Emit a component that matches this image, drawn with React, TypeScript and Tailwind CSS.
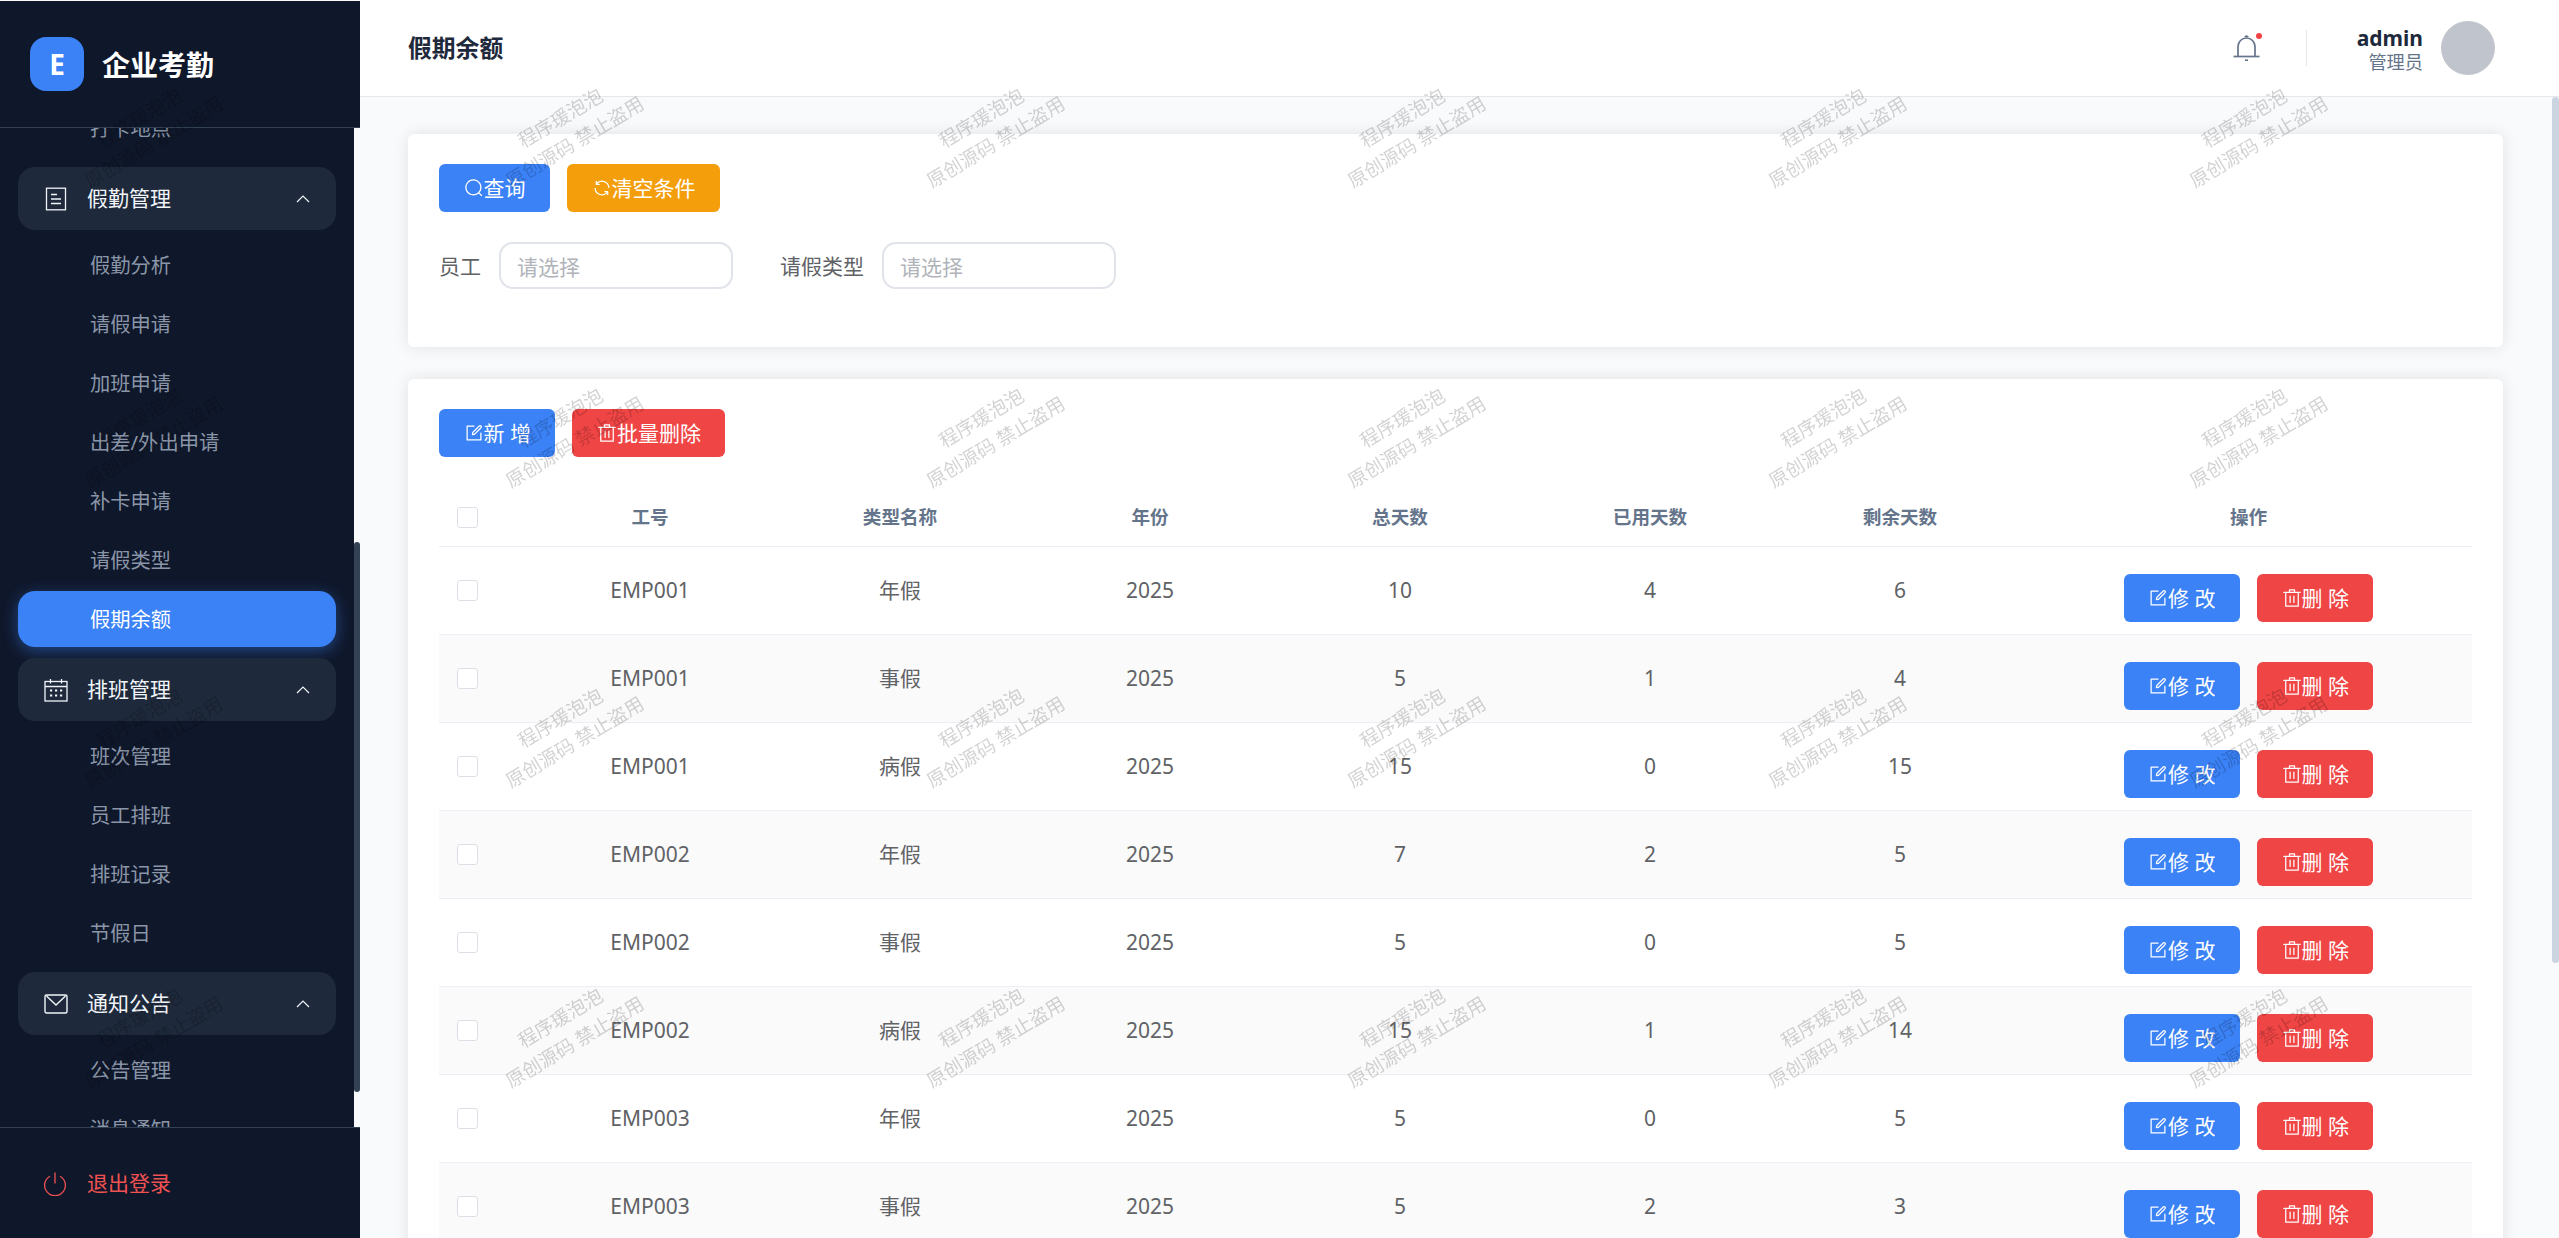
import type { ReactNode } from "react";

const BALANCE_ROWS = [
  ["EMP001", "年假", "2025", "10", "4", "6"],
  ["EMP001", "事假", "2025", "5", "1", "4"],
  ["EMP001", "病假", "2025", "15", "0", "15"],
  ["EMP002", "年假", "2025", "7", "2", "5"],
  ["EMP002", "事假", "2025", "5", "0", "5"],
  ["EMP002", "病假", "2025", "15", "1", "14"],
  ["EMP003", "年假", "2025", "5", "0", "5"],
  ["EMP003", "事假", "2025", "5", "2", "3"],
];

const HEADERS = ["工号", "类型名称", "年份", "总天数", "已用天数", "剩余天数"];

function Glyph({ children, size = 20 }: { children: ReactNode; size?: number }) {
  return (
    <svg viewBox="0 0 1024 1024" width={size} height={size} fill="currentColor" className="shrink-0">
      {children}
    </svg>
  );
}

const SearchIcon = () => (
  <Glyph>
    <path d="m795.904 750.72 124.992 124.928a32 32 0 0 1-45.248 45.248L750.656 795.904a416 416 0 1 1 45.248-45.248zM480 832a352 352 0 1 0 0-704 352 352 0 0 0 0 704" />
  </Glyph>
);

const RefreshIcon = () => (
  <Glyph>
    <path d="M771.776 794.88A384 384 0 0 1 128 512h64a320 320 0 0 0 555.712 216.448H654.72a32 32 0 1 1 0-64h149.056a32 32 0 0 1 32 32v148.928a32 32 0 1 1-64 0v-50.56zM276.288 295.616h92.992a32 32 0 0 1 0 64H220.16a32 32 0 0 1-32-32V178.56a32 32 0 0 1 64 0v50.56A384 384 0 0 1 896.128 512h-64a320 320 0 0 0-555.776-216.384z" />
  </Glyph>
);

const EditIcon = () => (
  <Glyph>
    <path d="M832 512a32 32 0 1 1 64 0v352a32 32 0 0 1-32 32H160a32 32 0 0 1-32-32V160a32 32 0 0 1 32-32h352a32 32 0 0 1 0 64H192v640h640z" />
    <path d="m469.952 554.24 52.8-7.552L847.104 222.4a32 32 0 1 0-45.248-45.248L477.44 501.44l-7.552 52.8zm422.4-422.4a96 96 0 0 1 0 135.808l-331.84 331.84a32 32 0 0 1-18.112 9.088L436.8 623.68a32 32 0 0 1-36.224-36.224l15.104-105.6a32 32 0 0 1 9.024-18.112l331.904-331.84a96 96 0 0 1 135.744 0z" />
  </Glyph>
);

const DeleteIcon = () => (
  <Glyph>
    <path d="M160 256H96a32 32 0 0 1 0-64h256V95.936a32 32 0 0 1 32-32h256a32 32 0 0 1 32 32V192h256a32 32 0 1 1 0 64h-64v672a32 32 0 0 1-32 32H192a32 32 0 0 1-32-32zm448-64v-64H416v64zM224 896h576V256H224zm192-128a32 32 0 0 1-32-32V416a32 32 0 0 1 64 0v320a32 32 0 0 1-32 32m192 0a32 32 0 0 1-32-32V416a32 32 0 0 1 64 0v320a32 32 0 0 1-32 32" />
  </Glyph>
);

const TicketsIcon = () => (
  <svg viewBox="0 0 24 24" width="24" height="24" fill="none" stroke="currentColor" strokeWidth="1.3">
    <rect x="2.5" y="1.2" width="19" height="21.6" />
    <path d="M7 7.5h6M7 12h10M7 16.5h10" />
  </svg>
);

const CalendarIcon = () => (
  <svg viewBox="0 0 24 24" width="24" height="24" fill="none" stroke="currentColor" strokeWidth="1.3">
    <rect x="1" y="3.5" width="22" height="19.5" />
    <path d="M1 8.5h22M6.5 1v4.5M17.5 1v4.5" />
    <path
      d="M6 12.5h2.2M11 12.5h2.2M16 12.5h2.2M6 17.5h2.2M11 17.5h2.2M16 17.5h2.2"
      strokeWidth="2"
    />
  </svg>
);

const MessageIcon = () => (
  <svg viewBox="0 0 24 24" width="24" height="24" fill="none" stroke="currentColor" strokeWidth="1.4">
    <rect x="1" y="3" width="22" height="18" rx="1.5" />
    <path d="M2.5 4 12 13l9.5-9" />
  </svg>
);

const PowerIcon = () => (
  <svg viewBox="0 0 24 24" width="24" height="24" fill="none" stroke="currentColor" strokeWidth="1.3">
    <path d="M7 4.2a10.4 10.4 0 1 0 10 0" />
    <path d="M12 0.5v11" />
  </svg>
);

const ChevronUp = () => (
  <svg viewBox="0 0 14 8" width="14" height="8" fill="none" stroke="currentColor" strokeWidth="1.2">
    <path d="M1 7 7 1l6 6" />
  </svg>
);

const BellIcon = () => (
  <svg viewBox="0 0 27 28" width="27" height="28" fill="none" stroke="#64748b" strokeWidth="1.7">
    <path d="M5 22V12.5a8.5 8.5 0 0 1 17 0V22" />
    <path d="M0.5 22.5h26" />
    <path d="M12 3.2a1.6 1.6 0 0 1 3 0" />
    <path d="M12 26.2h3" strokeWidth="1.6" />
  </svg>
);

function SubItem({ label, active }: { label: string; active?: boolean }) {
  return (
    <div
      className={`flex h-[56px] items-center rounded-[17px] pl-[72px] text-[20.3px] ${
        active ? "bg-[#3b82f6] text-white shadow-[0_4px_16px_rgba(59,130,246,0.45)]" : "text-[#8a96a8]"
      }`}
    >
      {label}
    </div>
  );
}

function MenuGroup({
  icon,
  title,
  items,
  activeItem,
}: {
  icon: ReactNode;
  title: string;
  items: string[];
  activeItem?: string;
}) {
  return (
    <div>
      <div className="flex h-[63px] items-center rounded-[17px] bg-[#1e293b] pl-[26px] pr-[26px] text-[#f1f5f9]">
        <span className="flex w-[24px] justify-center">{icon}</span>
        <span className="ml-[19px] flex-1 text-[21px]">{title}</span>
        <ChevronUp />
      </div>
      <div className="flex flex-col gap-[3px] pt-[7px]">
        {items.map((item) => (
          <SubItem key={item} label={item} active={item === activeItem} />
        ))}
      </div>
    </div>
  );
}

function Sidebar() {
  return (
    <aside className="relative flex h-full w-[360px] shrink-0 flex-col border-t border-[#f8fafc] bg-[#0f172a]">
      <div className="flex h-[127px] shrink-0 items-center border-b border-[#334155] pb-[1px] pl-[30px]">
        <div className="flex h-[54px] w-[54px] items-center justify-center rounded-[16px] bg-[#3b82f6] text-[28px] font-bold text-white">
          E
        </div>
        <span className="ml-[18px] pt-[3px] text-[28px] font-bold text-white">企业考勤</span>
      </div>
      <div className="relative min-h-0 flex-1 overflow-hidden pl-[18px] pr-[24px]">
        <div className="-mt-[28px] flex flex-col gap-[11px]">
          <SubItem label="打卡地点" />
          <MenuGroup
            icon={<TicketsIcon />}
            title="假勤管理"
            items={["假勤分析", "请假申请", "加班申请", "出差/外出申请", "补卡申请", "请假类型", "假期余额"]}
            activeItem="假期余额"
          />
          <MenuGroup
            icon={<CalendarIcon />}
            title="排班管理"
            items={["班次管理", "员工排班", "排班记录", "节假日"]}
          />
          <MenuGroup icon={<MessageIcon />} title="通知公告" items={["公告管理", "消息通知"]} />
        </div>
        {/* scrollbar */}
        <div className="absolute bottom-0 right-0 top-0 w-[6px] bg-[#f8fafc]">
          <div className="absolute left-0 right-0 top-[414px] h-[550px] rounded-[3px] bg-[#334155]" />
        </div>
      </div>
      <div className="flex h-[111px] shrink-0 items-center border-t border-[#334155] pl-[43px] pt-[2px] text-[#f05252]">
        <PowerIcon />
        <span className="ml-[20px] text-[21px]">退出登录</span>
      </div>
    </aside>
  );
}

function Btn({ color, icon, label }: { color: string; icon: ReactNode; label: string }) {
  return (
    <button className={`flex h-[48px] items-center justify-center rounded-[6px] px-[24.5px] text-[21px] text-white ${color}`}>
      {icon}
      <span className="pt-[2px]">{label}</span>
    </button>
  );
}

function Field({ label }: { label: string }) {
  return (
    <div className="flex items-center gap-[18px]">
      <label className="pt-[2px] text-[21px] text-[#606266]">{label}</label>
      <input
        readOnly
        placeholder="请选择"
        className="h-[47px] w-[234px] rounded-[14px] border-2 border-[#e0e3e9] bg-white pl-[16px] pt-[2px] text-[21px] outline-none placeholder:text-[#b0b3b9]"
      />
    </div>
  );
}

function BalanceTable() {
  return (
    <table className="w-full table-fixed border-collapse">
      <colgroup>
        <col className="w-[86px]" />
        <col className="w-[250px]" />
        <col className="w-[250px]" />
        <col className="w-[250px]" />
        <col className="w-[250px]" />
        <col className="w-[250px]" />
        <col className="w-[250px]" />
        <col />
      </colgroup>
      <thead>
        <tr className="h-[57px] border-b border-[#ebeef5] text-[18.6px] font-bold text-[#64748b]">
          <th className="pl-[18px] text-left">
            <span className="block h-[21px] w-[21px] rounded-[3px] border border-[#dcdfe6] bg-white" />
          </th>
          {HEADERS.map((h) => (
            <th key={h} className="font-bold">
              {h}
            </th>
          ))}
          <th className="font-bold">操作</th>
        </tr>
      </thead>
      <tbody>
        {BALANCE_ROWS.map((row, i) => (
          <tr
            key={i}
            className={`h-[88px] border-b border-[#ebeef5] text-center text-[21px] text-[#606266] ${
              i % 2 === 1 ? "bg-[#fafafa]" : "bg-white"
            }`}
          >
            <td className="pl-[18px]">
              <span className="block h-[21px] w-[21px] rounded-[3px] border border-[#dcdfe6] bg-white" />
            </td>
            {row.map((cell, j) => (
              <td key={j} className="pt-[2px]">
                {cell}
              </td>
            ))}
            <td className="pt-[15px]">
              <div className="flex justify-center gap-[17px]">
                <Btn color="bg-[#3b82f6]" icon={<EditIcon />} label="修 改" />
                <Btn color="bg-[#f04545]" icon={<DeleteIcon />} label="删 除" />
              </div>
            </td>
          </tr>
        ))}
      </tbody>
    </table>
  );
}

function Watermarks() {
  const cells = Array.from({ length: 35 });
  return (
    <div className="pointer-events-none fixed inset-0 z-50 overflow-hidden">
      <div className="-ml-[64px] -mt-[20px] grid w-[2947px] grid-cols-[repeat(7,421px)] auto-rows-[300px]">
        {cells.map((_, i) => (
          <div key={i} className="flex items-center justify-center">
            <div className="-rotate-[31deg] whitespace-nowrap text-center text-[19px] leading-[28px] text-black/[0.18]">
              <div>程序瑗泡泡</div>
              <div>原创源码 禁止盗用</div>
            </div>
          </div>
        ))}
      </div>
    </div>
  );
}

export default function App() {
  return (
    <div className="flex h-screen w-full overflow-hidden bg-[#f8fafc] font-['Noto_Sans','Noto_Sans_CJK_SC',sans-serif]">
      <Sidebar />
      <div className="flex min-w-0 flex-1 flex-col">
        <header className="flex h-[97px] shrink-0 items-center border-b border-[#e5e7eb] bg-white pl-[48px] pr-[64px]">
          <h1 className="flex-1 pt-[2px] text-[23.8px] font-bold text-[#1e293b]">假期余额</h1>
          <div className="relative mr-[46px]">
            <BellIcon />
            <span className="absolute -right-[2px] top-[-1px] h-[6px] w-[6px] rounded-full bg-[#ef4444]" />
          </div>
          <div className="h-[36px] w-px bg-[#e5e7eb]" />
          <div className="ml-[50px] flex flex-col items-end">
            <span className="pt-[2px] text-[21px] leading-[26px] font-bold text-[#1e293b]">admin</span>
            <span className="text-[18.2px] leading-[22px] text-[#64748b]">管理员</span>
          </div>
          <div className="ml-[18px] h-[54px] w-[54px] rounded-full bg-[#c0c4cc]" />
        </header>
        <main className="relative min-h-0 flex-1 overflow-hidden pl-[48px] pr-[56px] pt-[37px]">
          <section className="h-[213px] rounded-[6px] bg-white px-[31px] pt-[30px] shadow-[0_0_16px_rgba(0,0,0,0.1)]">
            <div className="flex gap-[17px]">
              <Btn color="bg-[#3b82f6]" icon={<SearchIcon />} label="查询" />
              <Btn color="bg-[#f59e0b]" icon={<RefreshIcon />} label="清空条件" />
            </div>
            <div className="mt-[30px] flex gap-[47px]">
              <Field label="员工" />
              <Field label="请假类型" />
            </div>
          </section>
          <section className="mt-[32px] rounded-[6px] bg-white px-[31px] pt-[30px] shadow-[0_0_16px_rgba(0,0,0,0.1)]">
            <div className="flex gap-[17px]">
              <Btn color="bg-[#3b82f6]" icon={<EditIcon />} label="新 增" />
              <Btn color="bg-[#f04545]" icon={<DeleteIcon />} label="批量删除" />
            </div>
            <div className="mt-[32px]">
              <BalanceTable />
            </div>
          </section>
          {/* scrollbar */}
          <div className="absolute bottom-0 right-0 top-0 w-[7px] bg-[#f8fafc]">
            <div className="h-[866px] rounded-[4px] bg-[#cbd5e1]" />
          </div>
        </main>
      </div>
      <Watermarks />
    </div>
  );
}
